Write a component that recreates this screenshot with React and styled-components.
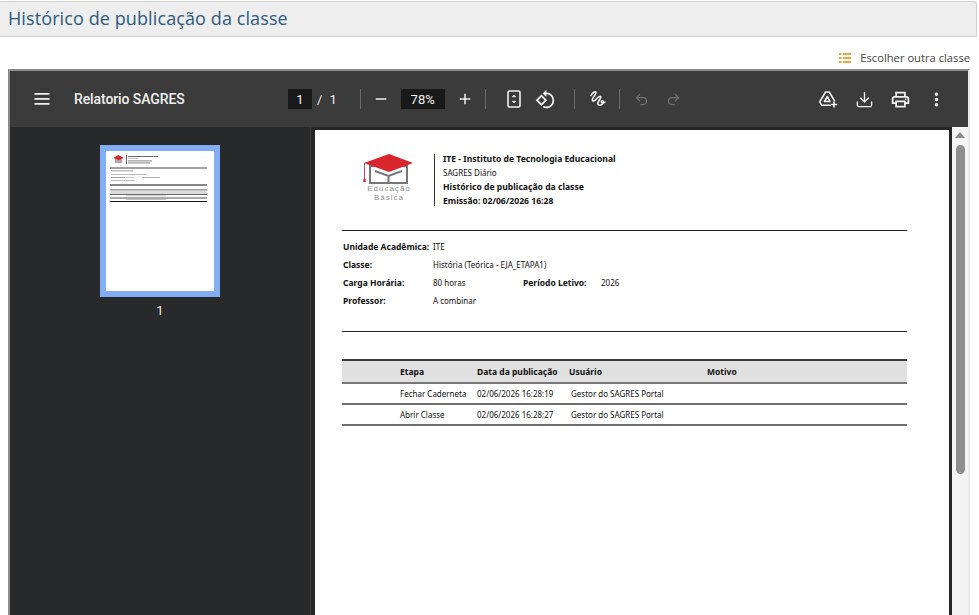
import React from 'react';
import styled, { createGlobalStyle } from 'styled-components';
import { MdRemove, MdAdd, MdOutlineRotate90DegreesCcw, MdOutlinePrint, MdMoreVert } from 'react-icons/md';
import { Download, Undo2, Redo2 } from 'lucide-react';

const Global = createGlobalStyle`
    html, body { margin: 0; padding: 0; height: 100%; background: #fff; overflow: hidden; }
    * { box-sizing: border-box; }
    #root { height: 615px; display: flex; flex-direction: column; font-family: "Open Sans", sans-serif; }
`;

const TitleBar = styled.div`
    margin: 1px 2px 0 0;
    height: 36px;
    display: flex;
    align-items: center;
    padding: 0 0 2px 8px;
    background: #eeeeee;
    border: 1px solid #cfcfcf;
    border-left: 0;
    border-top-right-radius: 3px;
`;

const Title = styled.h1`
    margin: 0;
    font-size: 18px;
    font-weight: 400;
    letter-spacing: 0.1px;
    color: #2c5a80;
`;

const ActionRow = styled.div`
    height: 32px;
    padding: 9px 9px 0 0;
    display: flex;
    justify-content: flex-end;
    align-items: center;
    gap: 9px;
    font-size: 11.2px;
    color: #444;
`;

const Frame = styled.div`
    flex: 1;
    min-height: 0;
    margin: 0 9px 0 8px;
    border-top: 2px solid #8c8c8c;
    border-left: 2px solid #8c8c8c;
    border-right: 2px solid #ececec;
    display: flex;
    flex-direction: column;
    overflow: hidden;
`;

const Toolbar = styled.div`
    height: 56px;
    flex: none;
    background: #3b3b3b;
    color: #f1f1f1;
    display: flex;
    align-items: center;
    padding: 0 20px 0 20px;
`;

const DocName = styled.div`
    width: 214px;
    margin-left: 20px;
    font-family: Roboto, sans-serif;
    font-size: 14px;
    font-weight: 500;
    letter-spacing: -0.1px;
    white-space: nowrap;
`;

const IconBtn = styled.span`
    width: 24px;
    height: 24px;
    flex: none;
    display: flex;
    align-items: center;
    justify-content: center;
    color: ${p => (p.$off ? '#6f6f6f' : '#f1f1f1')};
    margin-left: ${p => p.$ml || 0}px;
`;

const NumBox = styled.span`
    height: 20px;
    width: ${p => p.$w}px;
    background: #191919;
    display: flex;
    align-items: center;
    justify-content: center;
    font-family: Roboto, sans-serif;
    font-size: 13px;
    margin-left: ${p => p.$ml || 0}px;
`;

const PageText = styled.span`
    font-family: Roboto, sans-serif;
    font-size: 13px;
    margin-left: ${p => p.$ml}px;
`;

const Sep = styled.span`
    width: 1px;
    height: 20px;
    flex: none;
    background: #6a6a6a;
    margin-left: ${p => p.$l}px;
    margin-right: ${p => p.$r}px;
`;

const Spacer = styled.div`
    flex: 1;
`;

const RightTools = styled.div`
    display: flex;
    gap: 12px;
`;

const Body = styled.div`
    flex: 1;
    min-height: 0;
    display: flex;
`;

const Sidebar = styled.div`
    width: 300px;
    flex: none;
    background: #28292b;
    display: flex;
    flex-direction: column;
    align-items: center;
    padding-top: 18px;
`;

const Thumb = styled.div`
    width: 120px;
    height: 152px;
    border: 6px solid #83aef5;
    background: #fff;
    display: flex;
`;

const ThumbNum = styled.div`
    margin-top: 6px;
    font-family: Roboto, sans-serif;
    font-size: 13px;
    color: #f1f1f1;
`;

const Viewer = styled.div`
    flex: 1;
    min-width: 0;
    background: #262626;
    border-left: 1px solid #3d3d3d;
    padding: 3px 3px 0 4px;
    display: flex;
`;

const Page = styled.div`
    flex: 1;
    background: #fff;
    padding: 22px 42px 0 27px;
    color: #111;
    font-family: "Noto Sans", sans-serif;
    font-size: 8px;
`;

const Letterhead = styled.div`
    display: flex;
    align-items: center;
    height: 56px;
    padding-left: 19px;
`;

const Logo = styled.div`
    width: 56px;
    padding-bottom: 5px;
    display: flex;
    flex-direction: column;
    align-items: center;
`;

const LogoText = styled.div`
    font-family: "Liberation Sans", sans-serif;
    font-size: 8px;
    line-height: 8.5px;
    letter-spacing: 1px;
    text-align: center;
    color: #8f8f8f;
`;

const HeadRule = styled.span`
    width: 1px;
    height: 52px;
    background: #333;
    margin: 0 8px 0 17px;
`;

const HeadLine = styled.div`
    line-height: 14px;
    font-size: ${p => (p.$bold ? 8.6 : 8)}px;
    font-weight: ${p => (p.$bold ? 700 : 400)};
    white-space: nowrap;
`;

const Rule = styled.div`
    height: 1px;
    background: #222;
    margin-top: 22px;
`;

const Fields = styled.div`
    margin-top: 6px;
`;

const Field = styled.div`
    height: 18px;
    display: flex;
    align-items: center;
    padding-left: 1px;
`;

const Label = styled.span`
    width: ${p => p.$w || 90}px;
    flex: none;
    font-size: 8.5px;
    font-weight: 700;
`;

const Value = styled.span`
    width: ${p => p.$w || 'auto'};
    flex: none;
`;

const TableHead = styled.div`
    margin-top: 27px;
    display: grid;
    grid-template-columns: 58px 77px 92px 138px 1fr;
    height: 25px;
    align-items: center;
    background: #e0e0e0;
    border-top: 2px solid #3a3a3a;
    border-bottom: 2px solid #777;
    font-size: 8.5px;
    font-weight: 700;
`;

const TableRow = styled.div`
    display: grid;
    grid-template-columns: 58px 77px 94px 1fr;
    height: 21px;
    align-items: center;
    border-bottom: 2px solid #6e6e6e;
`;

const Scrollbar = styled.div`
    width: 16px;
    flex: none;
    background: #f4f4f4;
    display: flex;
    flex-direction: column;
    align-items: center;
    padding-top: 5px;
`;

const ScrollUp = styled.span`
    width: 0;
    height: 0;
    border-left: 5px solid transparent;
    border-right: 5px solid transparent;
    border-bottom: 6px solid #8a8a8a;
`;

const ScrollThumb = styled.div`
    width: 9px;
    height: 329px;
    margin-top: 7px;
    background: #8f8f8f;
    border-radius: 5px;
`;

const MenuIcon = () => (
    <svg width="16" height="12" viewBox="0 0 16 12" fill="currentColor">
        <path d="M.5 0h15v1.700H.500zM.5 5h15v1.700H.500zM.5 10h15v1.700H.500z" />
    </svg>
);

const FitIcon = () => (
    <svg width="16" height="18" viewBox="0 0 16 18" fill="none" stroke="currentColor">
        <rect x="2" y="1" width="12" height="16" rx="1.5" strokeWidth="1.6" />
        <path d="M6.2 6.800 8 5l1.800 1.800zM6.200 11.200 8 13l1.800-1.800z" fill="currentColor" strokeWidth="0.6" />
    </svg>
);

const InkIcon = () => (
    <svg width="20" height="20" viewBox="0 0 20 20" fill="none" stroke="currentColor" strokeWidth="1.6" strokeLinecap="round" strokeLinejoin="round">
        <path d="M3 6.500C4.500 3.500 7.500 2 8 3.500 8.500 5.500 4 8.500 4.300 11c.2 1.800 2.400.8 3.900-.8 1.700-1.800 3.800-3.600 4.600-2.400.9 1.400-3.600 4.600-3 7 .5 2 3.800 1.800 5.200-.5.8-1.400.3-2.800-1-2.500-1.100.3-.9 1.900.4 2.200 1 .2 1.900-.3 2.600-1" />
    </svg>
);

const DriveIcon = () => (
    <svg width="20" height="20" viewBox="0 0 20 20" fill="none" stroke="currentColor" strokeWidth="1.6" strokeLinejoin="round" strokeLinecap="round">
        <path d="M7.600 3h3.600l5.200 8.600M7.600 3 2 12.300a1 1 0 0 0 0 1l1.500 2.500a1 1 0 0 0 .9.500h7.800" />
        <path d="M9.400 7.500 6.400 12.500h5.600z" />
        <path d="M16 13v5M13.500 15.500h5" />
    </svg>
);

const ListIcon = () => (
    <svg width="12" height="10" viewBox="0 0 12 10" fill="#f0a33a">
        <path d="M0 0h2.500v2H0zM0 4h2.500v2H0zM0 8h2.500v2H0zM4 0h8v2H4zM4 4h8v2H4zM4 8h8v2H4z" />
    </svg>
);

const CapLogo = () => (
    <svg width="54" height="32" viewBox="0 0 54 32">
        <path d="M8 13h37v17H8z" fill="#fff" stroke="#777" strokeWidth="2" />
        <path d="M13 18l13.500 5L40 18M26.500 23v7" fill="none" stroke="#777" strokeWidth="2" />
        <path d="M27 1 51 10 27 19 2 10z" fill="#d9252c" />
        <path d="M2.500 10v17" stroke="#c9474a" strokeWidth="1" />
        <rect x="1.300" y="26" width="2.400" height="3" fill="#d9252c" />
    </svg>
);

const ThumbSheet = () => (
    <svg width="108" height="140" viewBox="0 0 108 140">
        <path d="M9 8h7v4H9z" fill="#aaa" />
        <path d="M7 7l5.500-3L18 7l-5.500 2z" fill="#d9252c" />
        <rect x="20" y="4" width="0.700" height="9" fill="#222" />
        <rect x="22" y="5" width="30" height="0.900" fill="#555" />
        <rect x="22" y="7" width="10" height="0.700" fill="#aaa" />
        <rect x="22" y="9.500" width="24" height="0.800" fill="#666" />
        <rect x="22" y="11.500" width="22" height="0.800" fill="#666" />
        <rect x="4" y="16.500" width="97" height="1" fill="#444" />
        <rect x="5" y="19.500" width="22" height="0.800" fill="#888" />
        <rect x="5" y="23" width="36" height="0.800" fill="#aaa" />
        <rect x="5" y="26" width="14" height="0.800" fill="#888" />
        <rect x="20" y="26" width="8" height="0.800" fill="#bbb" />
        <rect x="36" y="26" width="18" height="0.800" fill="#999" />
        <rect x="5" y="29" width="24" height="0.800" fill="#aaa" />
        <rect x="4" y="33.500" width="97" height="1" fill="#111" />
        <rect x="4" y="38.500" width="97" height="4.500" fill="#dcdcdc" />
        <rect x="4" y="38.500" width="97" height="0.700" fill="#555" />
        <rect x="4" y="43" width="97" height="0.800" fill="#444" />
        <rect x="20" y="44.500" width="40" height="0.700" fill="#aaa" />
        <rect x="4" y="46.500" width="97" height="1" fill="#555" />
        <rect x="20" y="48" width="40" height="0.700" fill="#aaa" />
        <rect x="4" y="50" width="97" height="1" fill="#111" />
    </svg>
);

const App = () => {
    return (
        <>
            <Global />
            <TitleBar>
                <Title>Histórico de publicação da classe</Title>
            </TitleBar>
            <ActionRow>
                <ListIcon />
                <span>Escolher outra classe</span>
            </ActionRow>
            <Frame>
                <Toolbar>
                    <IconBtn><MenuIcon /></IconBtn>
                    <DocName>Relatorio SAGRES</DocName>
                    <NumBox $w={24}>1</NumBox>
                    <PageText $ml={5}>/</PageText>
                    <PageText $ml={7}>1</PageText>
                    <Sep $l={23} $r={8} />
                    <IconBtn><MdRemove size={18} /></IconBtn>
                    <NumBox $w={44} $ml={8}>78%</NumBox>
                    <IconBtn $ml={8}><MdAdd size={18} /></IconBtn>
                    <Sep $l={8} $r={16} />
                    <IconBtn><FitIcon /></IconBtn>
                    <IconBtn $ml={8}><MdOutlineRotate90DegreesCcw size={21} /></IconBtn>
                    <Sep $l={16} $r={11} />
                    <IconBtn><InkIcon /></IconBtn>
                    <Sep $l={9} $r={10} />
                    <IconBtn $off><Undo2 size={15} /></IconBtn>
                    <IconBtn $off $ml={8}><Redo2 size={15} /></IconBtn>
                    <Spacer />
                    <RightTools>
                        <IconBtn><DriveIcon /></IconBtn>
                        <IconBtn><Download size={19} strokeWidth={1.7} /></IconBtn>
                        <IconBtn><MdOutlinePrint size={21} /></IconBtn>
                        <IconBtn><MdMoreVert size={21} /></IconBtn>
                    </RightTools>
                </Toolbar>
                <Body>
                    <Sidebar>
                        <Thumb><ThumbSheet /></Thumb>
                        <ThumbNum>1</ThumbNum>
                    </Sidebar>
                    <Viewer>
                        <Page>
                            <Letterhead>
                                <Logo>
                                    <CapLogo />
                                    <LogoText>Educação<br />Básica</LogoText>
                                </Logo>
                                <HeadRule />
                                <div>
                                    <HeadLine $bold>ITE - Instituto de Tecnologia Educacional</HeadLine>
                                    <HeadLine>SAGRES Diário</HeadLine>
                                    <HeadLine $bold>Histórico de publicação da classe</HeadLine>
                                    <HeadLine $bold>Emissão: 02/06/2026 16:28</HeadLine>
                                </div>
                            </Letterhead>
                            <Rule />
                            <Fields>
                                <Field><Label>Unidade Acadêmica:</Label><Value>ITE</Value></Field>
                                <Field><Label>Classe:</Label><Value>História (Teórica - EJA_ETAPA1)</Value></Field>
                                <Field>
                                    <Label>Carga Horária:</Label>
                                    <Value $w="90px">80 horas</Value>
                                    <Label $w={78}>Período Letivo:</Label>
                                    <Value>2026</Value>
                                </Field>
                                <Field><Label>Professor:</Label><Value>A combinar</Value></Field>
                            </Fields>
                            <Rule />
                            <TableHead>
                                <span />
                                <span>Etapa</span>
                                <span>Data da publicação</span>
                                <span>Usuário</span>
                                <span>Motivo</span>
                            </TableHead>
                            <TableRow>
                                <span />
                                <span>Fechar Caderneta</span>
                                <span>02/06/2026 16:28:19</span>
                                <span>Gestor do SAGRES Portal</span>
                            </TableRow>
                            <TableRow>
                                <span />
                                <span>Abrir Classe</span>
                                <span>02/06/2026 16:28:27</span>
                                <span>Gestor do SAGRES Portal</span>
                            </TableRow>
                        </Page>
                    </Viewer>
                    <Scrollbar>
                        <ScrollUp />
                        <ScrollThumb />
                    </Scrollbar>
                </Body>
            </Frame>
        </>
    );
};

export default App;
